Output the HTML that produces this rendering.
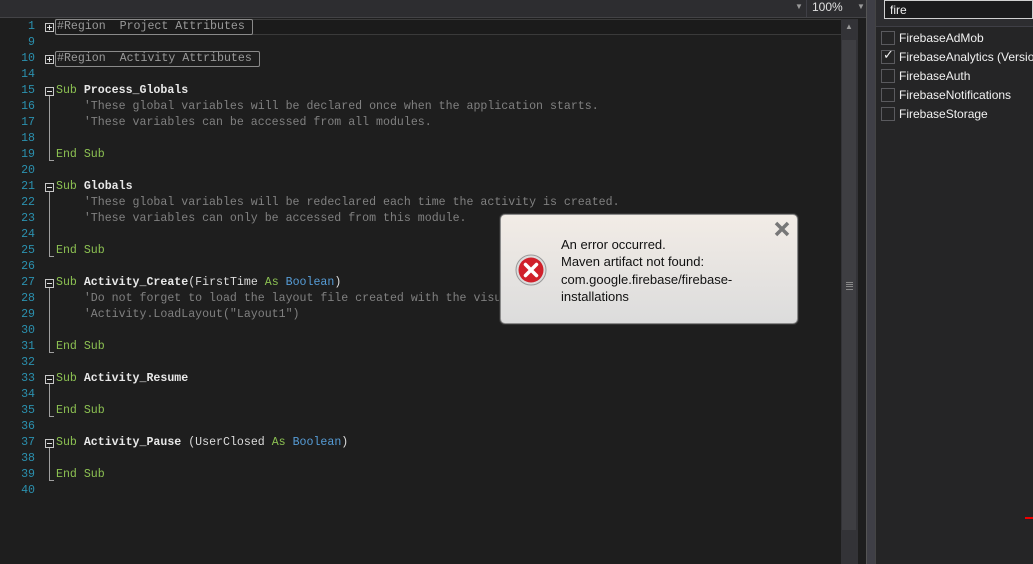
<!DOCTYPE html>
<html><head><style>
body{margin:0;width:1033px;height:564px;overflow:hidden;background:#1e1e1e;position:relative;font-family:"Liberation Mono",monospace}
.a{position:absolute}
.row{position:absolute;left:0;height:16px;line-height:16px;font-size:11.6px;white-space:pre;width:840px}
.n{position:absolute;right:805px;color:#2b91af;text-align:right}
.c{position:absolute;left:56px;color:#dcdcdc}
.k{color:#8cc152}.cm{color:#808080}.b{font-weight:bold;color:#e8e8e8}.t{color:#569cd6}
.box{position:absolute;left:45px;top:4px;width:7px;height:7px;border:1px solid #c8c8c8;}
.box:before{content:"";position:absolute;left:1px;top:3px;width:5px;height:1px;background:#e0e0e0}
.plus:after{content:"";position:absolute;left:3px;top:1px;width:1px;height:5px;background:#e0e0e0}
.reg{position:absolute;left:55px;top:0;height:14px;line-height:14px;border:1px solid #8a8a8a;border-radius:2px;color:#9a9a9a;padding:0 0 0 1px}
.fl{position:absolute;left:49px;width:4px;border-left:1px solid #a0a0a0;border-bottom:1px solid #a0a0a0}
.sans{font-family:"Liberation Sans",sans-serif}
.cb{position:absolute;left:881px;width:12px;height:12px;border:1px solid #5a5a5e}
.it{position:absolute;left:899px;width:134px;overflow:hidden;font-size:12px;color:#f1f1f1;font-family:"Liberation Sans",sans-serif;line-height:14px;white-space:nowrap}
</style></head><body>
<div class="a" style="left:0;top:0;width:876px;height:17px;background:#2d2d30;border-bottom:1px solid #434346"></div>
<div class="a sans" style="left:795px;top:2px;color:#999;font-size:8px">▼</div>
<div class="a" style="left:806px;top:0;width:1px;height:17px;background:#3f3f46"></div>
<div class="a sans" style="left:812px;top:0;color:#e0e0e0;font-size:12px;line-height:15px">100%</div>
<div class="a sans" style="left:857px;top:2px;color:#999;font-size:8px">▼</div>
<div class="a" style="left:55px;top:19px;width:785px;height:14px;border:1px solid #3a3a3a;background:#1b1b1b"></div>
<div class="a" style="left:841px;top:19px;width:17px;height:545px;background:#333337"></div>
<div class="a" style="left:842px;top:40px;width:14px;height:490px;background:#3e3e42"></div>
<div class="a sans" style="left:845px;top:22px;color:#999;font-size:8px">▲</div>
<div class="a" style="left:846px;top:282px;width:7px;height:6px;border-top:1px solid #888;border-bottom:1px solid #888"></div>
<div class="a" style="left:846px;top:284px;width:7px;height:1px;background:#888"></div>
<div class="a" style="left:846px;top:286px;width:7px;height:1px;background:#888"></div>
<div class="a" style="left:866px;top:0;width:1px;height:564px;background:#555"></div>
<div class="a" style="left:867px;top:0;width:8px;height:564px;background:#3f3f46"></div>
<div class="a" style="left:875px;top:0;width:1px;height:564px;background:#444"></div>
<div class="a" style="left:876px;top:0;width:157px;height:564px;background:#252526"></div>
<div class="a" style="left:876px;top:0;width:157px;height:26px;background:#2d2d30;border-bottom:1px solid #3f3f46"></div>
<div class="a sans" style="left:884px;top:0;width:149px;height:19px;background:#1b1b1c;border:1px solid #d0d0d0;color:#f1f1f1;font-size:12px;line-height:19px;padding-left:5px;box-sizing:border-box">fire</div>
<div class="cb" style="top:31px"></div><div class="it" style="top:31px">FirebaseAdMob</div>
<div class="cb" style="top:50px"></div><div class="a" style="left:883px;top:48px;color:#f1f1f1;font-size:13px;font-family:'DejaVu Sans'">✓</div><div class="it" style="top:50px">FirebaseAnalytics (Version</div>
<div class="cb" style="top:69px"></div><div class="it" style="top:69px">FirebaseAuth</div>
<div class="cb" style="top:88px"></div><div class="it" style="top:88px">FirebaseNotifications</div>
<div class="cb" style="top:107px"></div><div class="it" style="top:107px">FirebaseStorage</div>
<div class="a" style="left:1025px;top:517px;width:8px;height:2px;background:#e00"></div>

<div class="row" style="top:19px"><span class="n">1</span><span class="box plus"></span><span class="reg">#Region  Project Attributes </span></div>
<div class="row" style="top:35px"><span class="n">9</span></div>
<div class="row" style="top:51px"><span class="n">10</span><span class="box plus"></span><span class="reg">#Region  Activity Attributes </span></div>
<div class="row" style="top:67px"><span class="n">14</span></div>
<div class="row" style="top:83px"><span class="n">15</span><span class="box"></span><span class="c"><span class="k">Sub</span> <span class="b">Process_Globals</span></span></div>
<div class="row" style="top:99px"><span class="n">16</span><span class="c cm">    'These global variables will be declared once when the application starts.</span></div>
<div class="row" style="top:115px"><span class="n">17</span><span class="c cm">    'These variables can be accessed from all modules.</span></div>
<div class="row" style="top:131px"><span class="n">18</span></div>
<div class="row" style="top:147px"><span class="n">19</span><span class="c k">End Sub</span></div>
<div class="row" style="top:163px"><span class="n">20</span></div>
<div class="row" style="top:179px"><span class="n">21</span><span class="box"></span><span class="c"><span class="k">Sub</span> <span class="b">Globals</span></span></div>
<div class="row" style="top:195px"><span class="n">22</span><span class="c cm">    'These global variables will be redeclared each time the activity is created.</span></div>
<div class="row" style="top:211px"><span class="n">23</span><span class="c cm">    'These variables can only be accessed from this module.</span></div>
<div class="row" style="top:227px"><span class="n">24</span></div>
<div class="row" style="top:243px"><span class="n">25</span><span class="c k">End Sub</span></div>
<div class="row" style="top:259px"><span class="n">26</span></div>
<div class="row" style="top:275px"><span class="n">27</span><span class="box"></span><span class="c"><span class="k">Sub</span> <span class="b">Activity_Create</span>(FirstTime <span class="k">As</span> <span class="t">Boolean</span>)</span></div>
<div class="row" style="top:291px"><span class="n">28</span><span class="c cm">    'Do not forget to load the layout file created with the visual designer.</span></div>
<div class="row" style="top:307px"><span class="n">29</span><span class="c cm">    'Activity.LoadLayout("Layout1")</span></div>
<div class="row" style="top:323px"><span class="n">30</span></div>
<div class="row" style="top:339px"><span class="n">31</span><span class="c k">End Sub</span></div>
<div class="row" style="top:355px"><span class="n">32</span></div>
<div class="row" style="top:371px"><span class="n">33</span><span class="box"></span><span class="c"><span class="k">Sub</span> <span class="b">Activity_Resume</span></span></div>
<div class="row" style="top:387px"><span class="n">34</span></div>
<div class="row" style="top:403px"><span class="n">35</span><span class="c k">End Sub</span></div>
<div class="row" style="top:419px"><span class="n">36</span></div>
<div class="row" style="top:435px"><span class="n">37</span><span class="box"></span><span class="c"><span class="k">Sub</span> <span class="b">Activity_Pause</span> (UserClosed <span class="k">As</span> <span class="t">Boolean</span>)</span></div>
<div class="row" style="top:451px"><span class="n">38</span></div>
<div class="row" style="top:467px"><span class="n">39</span><span class="c k">End Sub</span></div>
<div class="row" style="top:483px"><span class="n">40</span></div>

<div class="fl" style="top:96px;height:64px"></div>
<div class="fl" style="top:192px;height:64px"></div>
<div class="fl" style="top:288px;height:64px"></div>
<div class="fl" style="top:384px;height:32px"></div>
<div class="fl" style="top:448px;height:32px"></div>

<div class="a sans" style="left:500px;top:214px;width:296px;height:108px;border:1px solid #8a8a8a;border-radius:5px;background:linear-gradient(#f2ece6,#dcdcdc);box-shadow:0 0 0 1px #333"></div>
<svg class="a" style="left:515px;top:254px" width="32" height="32" viewBox="0 0 32 32">
<circle cx="16" cy="16" r="15" fill="#ddd" stroke="#999"/>
<circle cx="16" cy="16" r="12.5" fill="#d0202a"/>
<path d="M10.5 10.5L21.5 21.5M21.5 10.5L10.5 21.5" stroke="#fff" stroke-width="3.5" stroke-linecap="round"/>
</svg>
<svg class="a" style="left:773px;top:220px" width="18" height="18" viewBox="0 0 18 18"><path d="M3 3L15 15M15 3L3 15" stroke="#777" stroke-width="3.5"/></svg>
<div class="a sans" style="left:561px;top:236px;font-size:13px;line-height:17.3px;color:#111">An error occurred.<br>Maven artifact not found:<br>com.google.firebase/firebase-<br>installations</div>
</body></html>
